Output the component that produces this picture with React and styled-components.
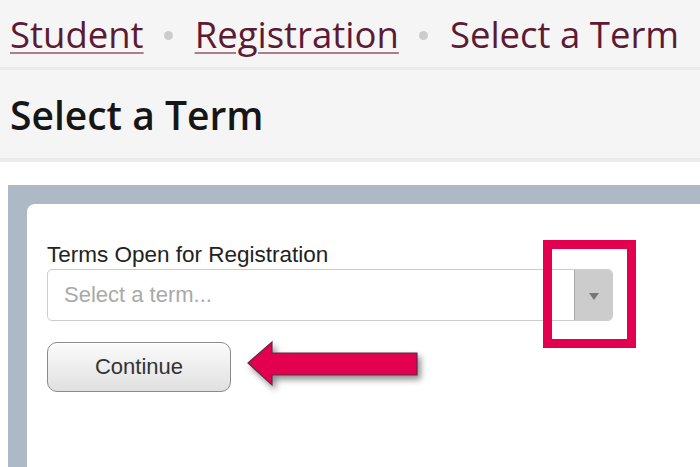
import React from 'react';
import styled, { createGlobalStyle } from 'styled-components';

const GlobalStyle = createGlobalStyle`
  html, body {
    margin: 0;
    padding: 0;
    background: #fff;
    overflow: hidden;
  }
`;

const Page = styled.div`
  width: 700px;
  height: 467px;
  display: flex;
  flex-direction: column;
  background: #fff;
`;

const Breadcrumbs = styled.nav`
  height: 67px;
  background: #f5f5f5;
  border-bottom: 3px solid #ebebeb;
  display: flex;
  align-items: center;
  padding-left: 10px;
  font-family: 'Open Sans', 'DejaVu Sans', sans-serif;
  font-size: 36.5px;
  color: #5c1b33;
  white-space: nowrap;
`;

const Crumb = styled.a`
  color: #5c1b33;
  text-decoration: underline;
  text-decoration-color: #a97f8c;
  text-decoration-thickness: 2px;
  text-underline-offset: 4px;
`;

const Current = styled.span`
  color: #5c1b33;
`;

const Dot = styled.span`
  width: 9px;
  height: 9px;
  border-radius: 50%;
  background: #cccccc;
  margin: 4px 22px 0 20px;
`;

const TitleBar = styled.header`
  height: 88px;
  background: #f5f5f5;
  border-bottom: 4px solid #ebebeb;
  display: flex;
  align-items: center;
  padding-left: 10px;
`;

const Title = styled.h1`
  margin: 0;
  font-family: 'Open Sans', 'DejaVu Sans', sans-serif;
  font-weight: 600;
  font-size: 39px;
  color: #161616;
`;

const Panel = styled.section`
  flex: 1;
  margin: 23px 0 0 8px;
  background: #adb9c4;
  padding: 19px 0 0 19px;
  display: flex;
`;

const Card = styled.div`
  position: relative;
  flex: 1;
  background: #fff;
  border-top-left-radius: 8px;
  padding: 38px 0 0 20px;
  font-family: 'Liberation Sans', Arial, sans-serif;
`;

const Label = styled.label`
  display: block;
  font-size: 22.5px;
  line-height: 25px;
  color: #222;
`;

const Select = styled.div`
  margin-top: 2px;
  width: 566px;
  height: 52px;
  box-sizing: border-box;
  border: 1px solid #cccccc;
  border-radius: 5px;
  display: flex;
  align-items: center;
  overflow: hidden;
`;

const Placeholder = styled.span`
  flex: 1;
  padding-left: 16px;
  font-size: 22px;
  color: #a9a9a9;
`;

const ArrowBox = styled.span`
  width: 37px;
  height: 100%;
  background: #cccccc;
  border-left: 1px solid #aaaaaa;
  display: flex;
  align-items: center;
  justify-content: center;

  &::after {
    content: '';
    margin-top: 2px;
    border-left: 5px solid transparent;
    border-right: 5px solid transparent;
    border-top: 7px solid #777;
  }
`;

const Button = styled.button`
  margin-top: 21px;
  width: 184px;
  height: 50px;
  border: 1px solid #8a8a8a;
  border-radius: 10px;
  background: linear-gradient(#fbfbfb, #e0e0e0);
  font-family: 'Liberation Sans', Arial, sans-serif;
  font-size: 22px;
  color: #333;
  box-shadow: inset 0 1px 0 #fff;
`;

const Highlight = styled.div`
  position: absolute;
  left: 516px;
  top: 36px;
  width: 93px;
  height: 108px;
  box-sizing: border-box;
  border: 9px solid #e2004f;
`;

const Pointer = styled.svg`
  position: absolute;
  left: 213px;
  top: 131px;
  overflow: visible;
`;

function App() {
  return (
    <Page>
      <GlobalStyle />
      <Breadcrumbs>
        <Crumb>Student</Crumb>
        <Dot />
        <Crumb>Registration</Crumb>
        <Dot />
        <Current>Select a Term</Current>
      </Breadcrumbs>
      <TitleBar>
        <Title>Select a Term</Title>
      </TitleBar>
      <Panel>
        <Card>
          <Label>Terms Open for Registration</Label>
          <Select>
            <Placeholder>Select a term...</Placeholder>
            <ArrowBox />
          </Select>
          <Button>Continue</Button>
          <Highlight />
          <Pointer width="190" height="60" viewBox="0 0 190 60">
            <defs>
              <filter id="shadow" x="-20%" y="-40%" width="140%" height="180%">
                <feDropShadow dx="3" dy="4" stdDeviation="3" floodColor="#000" floodOpacity="0.45" />
              </filter>
            </defs>
            <polygon
              points="8,28 32,7 32,18 177,18 177,40 32,40 32,50"
              fill="#e2004f"
              stroke="#5a2a45"
              strokeWidth="1.2"
              filter="url(#shadow)"
            />
          </Pointer>
        </Card>
      </Panel>
    </Page>
  );
}

export default App;
